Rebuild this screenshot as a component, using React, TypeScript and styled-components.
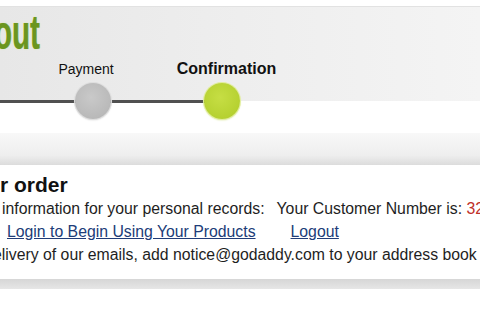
import React from "react";
import styled, { createGlobalStyle } from "styled-components";

const Global = createGlobalStyle`
  html, body { margin: 0; padding: 0; background: #fff; }
  body { width: 480px; height: 320px; overflow: hidden; font-family: "Liberation Sans", Arial, sans-serif; }
`;

const Page = styled.div`
  width: 480px;
  height: 320px;
  overflow: hidden;
  padding-top: 6px;
  box-sizing: border-box;
  background: #fff;
`;

const Header = styled.header`
  display: flex;
  flex-direction: column;
  background: linear-gradient(to right, #e7e7e7 0%, #eeeeee 50%, #f4f4f4 100%);
  background-size: 100% 94px;
  background-repeat: no-repeat;
  border-top: 1px solid #e2e2e2;
`;

const Logo = styled.div`
  display: inline-block;
  margin-top: 1px;
  margin-left: -6px;
  height: 48px;
  font-size: 49px;
  line-height: 48px;
  font-weight: bold;
  color: #6b9520;
  text-shadow: 0 0 2px #d6e89c, 0.5px 0 0 #6b9520;
  transform: scaleX(0.6);
  transform-origin: left center;
  white-space: nowrap;
`;

const Steps = styled.div`
  position: relative;
  display: flex;
  gap: 49px;
  padding-left: 53px;
  margin-top: 5px;
  &::before {
    content: "";
    position: absolute;
    left: 0;
    width: 210px;
    top: 39px;
    height: 3px;
    background: #505050;
  }
`;

const Step = styled.div`
  position: relative;
  width: 80px;
  display: flex;
  flex-direction: column;
  align-items: center;
`;

const Label = styled.div<{ $active?: boolean; $shift: number }>`
  font-size: ${(p) => (p.$active ? "16px" : "14px")};
  line-height: 16px;
  font-weight: ${(p) => (p.$active ? "bold" : "normal")};
  color: #111;
  white-space: nowrap;
  margin-left: ${(p) => p.$shift}px;
`;

const Dot = styled.div<{ $active?: boolean }>`
  position: relative;
  width: 36px;
  height: 36px;
  margin-top: 6px;
  border-radius: 50%;
  background: ${(p) =>
    p.$active
      ? "radial-gradient(circle at 45% 40%, #c6de44 0%, #b6d131 70%, #a9c62a 100%)"
      : "radial-gradient(circle at 45% 40%, #c9c9c9 0%, #b9b9b9 70%, #a8a8a8 100%)"};
  box-shadow: ${(p) =>
    p.$active ? "0 0 0 1px #e2ee9c, 0 1px 2px #cfdf80" : "0 0 0 1px #dedede, 0 1px 2px #cfcfcf"};
`;

const Bar = styled.div`
  margin-top: 14px;
  height: 32px;
  background: linear-gradient(to bottom, #f8f8f8 0%, #eeeeee 70%, #dcdcdc 100%);
`;

const Content = styled.section`
  padding-top: 8px;
  color: #1e1e1e;
`;

const Title = styled.h1`
  margin: 0;
  font-size: 21px;
  line-height: 24px;
  font-weight: bold;
  color: #111;
`;

const Line = styled.div<{ $indent: number }>`
  font-size: 15.8px;
  line-height: 23px;
  white-space: nowrap;
  margin-left: ${(p) => p.$indent}px;
  display: flex;
  gap: 35px;
`;

const Red = styled.span`
  color: #c0302a;
`;

const Gap = styled.span`
  display: inline-block;
  width: 12px;
`;

const Link = styled.a`
  color: #203c78;
  text-decoration: underline;
`;

const Footer = styled.div`
  margin-top: 13px;
  height: 10px;
  background: linear-gradient(to bottom, #d6d6d6, #e6e6e6);
`;

export default function App() {
  return (
    <Page>
      <Global />
      <Header>
        <Logo>out</Logo>
        <Steps>
          <Step>
            <Label $shift={-14}>Payment</Label>
            <Dot />
          </Step>
          <Step>
            <Label $active $shift={9}>Confirmation</Label>
            <Dot $active />
          </Step>
        </Steps>
      </Header>
      <Bar />
      <Content>
        <Title>r order</Title>
        <Line $indent={2}>
          <span>
            information for your personal records:<Gap />Your Customer Number is: <Red>32</Red>
          </span>
        </Line>
        <Line $indent={7}>
          <Link href="#">Login to Begin Using Your Products</Link>
          <Link href="#">Logout</Link>
        </Line>
        <Line $indent={-7}>
          <span>elivery of our emails, add notice@godaddy.com to your address book</span>
        </Line>
      </Content>
      <Footer />
    </Page>
  );
}
